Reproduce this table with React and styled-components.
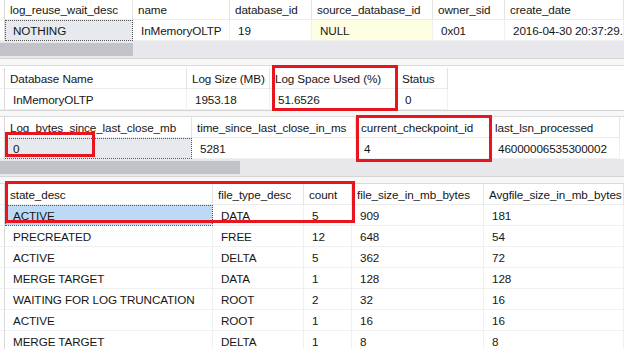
import styled, { createGlobalStyle } from "styled-components"

const GlobalStyle = createGlobalStyle`
  body {
    margin: 0;
    background: #ffffff;
    font-family: "Liberation Sans", Arial, sans-serif;
  }
`

const panels = [
  {
    cols: "5px 128px 97px 82px 121px 72px 1fr",
    headH: 20,
    head: ["log_reuse_wait_desc", "name", "database_id", "source_database_id", "owner_sid", "create_date"],
    rows: [[{ t: "NOTHING", focus: true }, "InMemoryOLTP", "19", { t: "NULL", nul: true }, "0x01", "2016-04-30 20:37:29."]],
    thumb: 133,
    gap: 8,
  },
  {
    cols: "5px 182px 83px 127px 51px 1fr",
    headH: 21,
    head: ["Database Name", "Log Size (MB)", "Log Space Used (%)", "Status", null],
    rows: [["InMemoryOLTP", "1953.18", "51.6526", "0", null]],
    gap: 7,
    top: 2,
  },
  {
    cols: "5px 187px 164px 134px 130px 1fr",
    headH: 21,
    head: ["Log_bytes_since_last_close_mb", "time_since_last_close_in_ms", "current_checkpoint_id", "last_lsn_processed", null],
    rows: [[{ t: "0", focus: true }, "5281", "4", "46000006535300002", null]],
    thumb: 240,
    gap: 8,
  },
  {
    cols: "5px 208px 91px 48px 132px 1fr",
    headH: 21,
    head: ["state_desc", "file_type_desc", "count", "file_size_in_mb_bytes", "Avgfile_size_in_mb_bytes"],
    rows: [
      [{ t: "ACTIVE", sel: true }, "DATA", "5", "909", "181"],
      ["PRECREATED", "FREE", "12", "648", "54"],
      ["ACTIVE", "DELTA", "5", "362", "72"],
      ["MERGE TARGET", "DATA", "1", "128", "128"],
      ["WAITING FOR LOG TRUNCATION", "ROOT", "2", "32", "16"],
      ["ACTIVE", "ROOT", "1", "16", "16"],
      ["MERGE TARGET", "DELTA", "1", "8", "8"],
    ],
  },
]

// red annotation boxes drawn over the grid
const marks = [
  { left: 272, top: 65, w: 126, h: 46 },
  { left: 5, top: 132, w: 90, h: 25 },
  { left: 356, top: 115, w: 136, h: 47 },
  { left: 5, top: 181, w: 350, h: 42 },
]

export default function App() {
  return (
    <Page>
      <GlobalStyle />
      {panels.map((p, i) => (
        <Panel key={i} $top={p.top}>
          <Row $cols={p.cols} $h={p.headH}>
            <RowHead />
            {p.head.map((h, j) =>
              h === null ? <Filler key={j} /> : <HeadCell key={j}>{h}</HeadCell>
            )}
          </Row>
          {p.rows.map((r, k) => (
            <Row key={k} $cols={p.cols} $h={21}>
              <RowHead />
              {r.map((c, j) => {
                if (c === null) return <Filler key={j} />
                const cell = typeof c === "string" ? { t: c } : c
                return (
                  <Cell key={j} $focus={cell.focus} $sel={cell.sel} $nul={cell.nul}>
                    {cell.t}
                  </Cell>
                )
              })}
            </Row>
          ))}
          {p.thumb && (
            <ScrollBar>
              <Thumb style={{ width: p.thumb }} />
            </ScrollBar>
          )}
          {p.gap && <Splitter $h={p.gap} />}
        </Panel>
      ))}
      {marks.map((m, i) => (
        <RedBox key={i} style={{ left: m.left, top: m.top, width: m.w, height: m.h }} />
      ))}
    </Page>
  )
}

const Page = styled.div`
  position: relative;
  width: 624px;
  height: 349px;
  overflow: hidden;
  background: #ffffff;
  font-size: 11.7px;
  letter-spacing: -0.1px;
  color: #161616;
`

const Panel = styled.div`
  display: flex;
  flex-direction: column;
  padding-top: ${(p) => p.$top || 0}px;
`

const Row = styled.div`
  display: grid;
  grid-template-columns: ${(p) => p.$cols};
  height: ${(p) => p.$h}px;
`

const RowHead = styled.div`
  border-right: 1px solid #d9d9d9;
  border-bottom: 1px solid #efefef;
  background: #ffffff;
`

const HeadCell = styled.div`
  display: flex;
  align-items: center;
  padding-left: 5px;
  white-space: nowrap;
  overflow: hidden;
  border-right: 1px solid #e3e3e3;
  border-bottom: 1px solid #ececec;
  background: #ffffff;
`

const Cell = styled.div`
  display: flex;
  align-items: center;
  padding-left: 8px;
  white-space: nowrap;
  overflow: hidden;
  border-right: 1px solid #f0f0f0;
  border-bottom: 1px solid #f0f0f0;
  background: ${(p) => (p.$sel ? "#bcdaf6" : p.$focus ? "#e6eaee" : p.$nul ? "#fefee3" : "#ffffff")};
  ${(p) => (p.$sel || p.$focus) && "outline: 1px dotted #555; outline-offset: -1px;"}
`

const Filler = styled.div`
  background: #ffffff;
`

const ScrollBar = styled.div`
  height: 17px;
  background: #e8e8ec;
  display: flex;
  align-items: center;
`

const Thumb = styled.div`
  height: 13px;
  background: #c2c3c9;
`

const Splitter = styled.div`
  height: ${(p) => p.$h}px;
  box-sizing: border-box;
  background: #f7f7f7;
  border-top: 1px solid #d4d4d4;
  border-bottom: 1px solid #dadada;
`

const RedBox = styled.div`
  position: absolute;
  box-sizing: border-box;
  border: 3px solid #e8141e;
  pointer-events: none;
`
